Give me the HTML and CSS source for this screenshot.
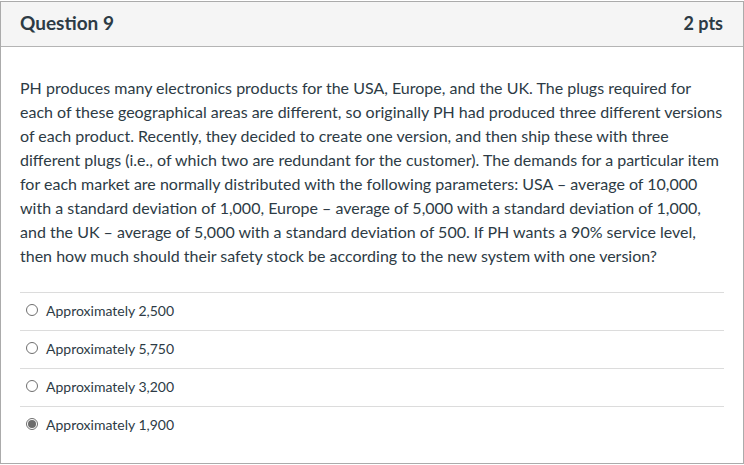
FILE: index.html
```html
<!DOCTYPE html>
<html>
<head>
<meta charset="utf-8">
<link rel="stylesheet" href="styles.css">
</head>
<body>
<div class="question">
  <div class="header">
    <span class="title">Question 9</span>
    <span class="pts">2 pts</span>
  </div>
  <div class="body">
    <p class="text">PH produces many electronics products for the USA, Europe, and the UK. The plugs required for each of these geographical areas are different, so originally PH had produced three different versions of each product. Recently, they decided to create one version, and then ship these with three different plugs (i.e., of which two are redundant for the customer). The demands for a particular item for each market are normally distributed with the following parameters: USA – average of 10,000 with a standard deviation of 1,000, Europe – average of 5,000 with a standard deviation of 1,000, and the UK – average of 5,000 with a standard deviation of 500. If PH wants a 90% service level, then how much should their safety stock be according to the new system with one version?</p>
    <div class="answers">
      <label class="answer"><span class="radio"></span><span>Approximately 2,500</span></label>
      <label class="answer"><span class="radio"></span><span>Approximately 5,750</span></label>
      <label class="answer"><span class="radio"></span><span>Approximately 3,200</span></label>
      <label class="answer"><span class="radio checked"></span><span>Approximately 1,900</span></label>
    </div>
  </div>
</div>
</body>
</html>
```
FILE: styles.css
```css
html, body {
  margin: 0;
  padding: 0;
  background: #fff;
}
body {
  font-family: Lato, "Liberation Sans", sans-serif;
  color: #2d3b45;
  padding-top: 1px;
}
.question {
  border: 1px solid #ababab;
  box-sizing: border-box;
  width: 744px;
  height: 463px;
}
.header {
  height: 44px;
  background: #f5f5f5;
  border-bottom: 1px solid #b4b4b4;
  display: flex;
  align-items: center;
  justify-content: space-between;
  padding: 0 20px 3px 19px;
  box-sizing: border-box;
  height: 45px;
}
.title {
  font-size: 19px;
  font-weight: 700;
}
.pts {
  font-size: 18px;
  font-weight: 700;
}
.body {
  padding: 29px 19px 0 19px;
}
.text {
  margin: 0;
  font-size: 16px;
  line-height: 24px;
}
.answers {
  margin-top: 24px;
}
.answer {
  display: flex;
  align-items: center;
  height: 37px;
  padding-bottom: 3px;
  box-sizing: border-box;
  height: 38px;
  border-top: 1px solid #dcdcdc;
  font-size: 14px;
  color: #2d3b45;
}
.radio {
  width: 12px;
  height: 12px;
  border: 1px solid #6f6f6f;
  border-radius: 50%;
  box-sizing: border-box;
  margin: 0 8px 0 6px;
  display: flex;
  align-items: center;
  justify-content: center;
  background: #fff;
}
.radio.checked::after {
  content: "";
  width: 8px;
  height: 8px;
  border-radius: 50%;
  background: #6c6c6c;
}
```
